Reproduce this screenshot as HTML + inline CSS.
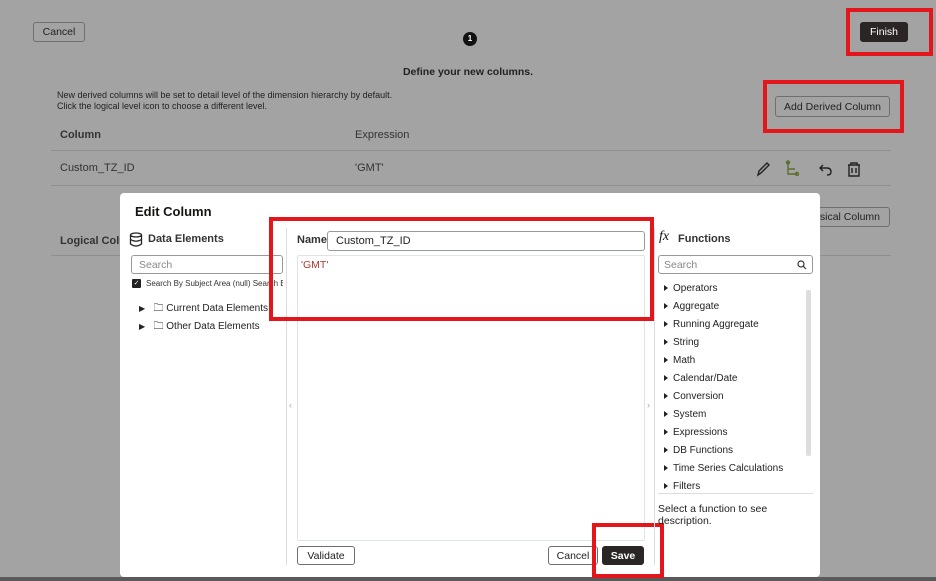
<!DOCTYPE html>
<html><head><meta charset="utf-8"><style>
*{box-sizing:border-box;margin:0;padding:0}
body{width:936px;height:581px;background:#a3a3a3;font-family:"Liberation Sans",sans-serif;color:#161513;position:relative;overflow:hidden;font-size:11px}
.a{position:absolute;white-space:nowrap}
.btn{position:absolute;border:1px solid #6f6f6f;border-radius:3px;font-size:10.5px;display:flex;align-items:center;justify-content:center;color:#222;white-space:nowrap;overflow:hidden}
.red{position:absolute;border:4px solid #e3161b}
.line{position:absolute;height:1px;background:#8f8f8f}
.fn{position:absolute;font-size:10px;color:#222;white-space:nowrap}
.fn:before{content:"";display:inline-block;border-left:4px solid #222;border-top:3.5px solid transparent;border-bottom:3.5px solid transparent;margin-right:5px;vertical-align:0px}
</style></head><body>
<div class="btn" style="left:33px;top:22px;width:52px;height:20px;">Cancel</div>
<div class="a" style="left:463px;top:32px;width:14px;height:14px;border-radius:50%;background:#111;color:#fff;font-size:8px;font-weight:bold;text-align:center;line-height:14px">1</div>
<div class="btn" style="left:860px;top:22px;width:48px;height:20px;background:#2a2625;color:#fff;border-color:#2a2625">Finish</div>
<div class="red" style="left:846px;top:8px;width:87px;height:48px"></div>
<div class="a" style="left:0;width:936px;top:66px;text-align:center;font-size:10.5px;font-weight:bold;color:#222">Define your new columns.</div>
<div class="a" style="left:57px;top:90px;font-size:9px;line-height:11px;color:#222">New derived columns will be set to detail level of the dimension hierarchy by default.<br>Click the logical level icon to choose a different level.</div>
<div class="btn" style="left:775px;top:96px;width:115px;height:21px;">Add Derived Column</div>
<div class="red" style="left:763px;top:80px;width:141px;height:53px"></div>
<div class="a" style="left:60px;top:129px;font-size:11px;font-weight:bold;color:#333">Column</div>
<div class="a" style="left:355px;top:129px;font-size:11px;color:#333">Expression</div>
<div class="line" style="left:51px;top:150px;width:840px"></div>
<div class="a" style="left:60px;top:162px;font-size:11px;color:#333">Custom_TZ_ID</div>
<div class="a" style="left:355px;top:162px;font-size:11px;color:#333">'GMT'</div>
<svg class="a" style="left:755px;top:160px" width="110" height="18" viewBox="0 0 110 18" fill="none" stroke="#222" stroke-width="1.4">
<path d="M3 15 L4 11 L12 3 L14 5 L6 13 Z"/>
<path d="M33 2 V14 H42 M33 9 H40" stroke="#5a6e2a"/><circle cx="33" cy="2.5" r="1.5" stroke="#5a6e2a"/><circle cx="42" cy="14" r="1.5" stroke="#5a6e2a"/>
<path d="M68 5 L65 8 L68 11 M65 8 H72 Q76 8 76 12 Q76 15 72 15"/>
<path d="M93 5 H105 M96 5 V3 H102 V5 M94 5 V16 H104 V5 M97 8 V13 M101 8 V13"/>
</svg>
<div class="line" style="left:51px;top:185px;width:840px"></div>
<div class="btn" style="left:800px;top:207px;width:90px;height:20px;justify-content:flex-end;padding-right:9px">Physical Column</div>
<div class="a" style="left:60px;top:235px;font-size:11px;font-weight:bold;color:#333">Logical Column</div>
<div class="line" style="left:51px;top:255px;width:840px"></div>

<div class="a" style="left:120px;top:193px;width:700px;height:384px;background:#fff;border-radius:4px"></div>
<div class="a" style="left:0;top:577px;width:936px;height:4px;background:#5a5a5a"></div>
<div class="a" style="left:135px;top:204px;font-size:13px;font-weight:bold">Edit Column</div>
<svg class="a" style="left:129px;top:232px" width="14" height="15" viewBox="0 0 14 15" fill="none" stroke="#222" stroke-width="1.3"><ellipse cx="7" cy="3" rx="5.5" ry="2"/><path d="M1.5 3 V12 Q7 16 12.5 12 V3 M1.5 7.5 Q7 11 12.5 7.5"/></svg>
<div class="a" style="left:148px;top:233px;font-size:11px;font-weight:bold;color:#333">Data Elements</div>
<div class="a" style="left:131px;top:255px;width:152px;height:19px;border:1px solid #999;border-radius:3px;padding:3px 7px;color:#888;font-size:10.5px">Search</div>
<div class="a" style="left:132px;top:279px;width:9px;height:9px;background:#222;border-radius:1px;color:#fff;font-size:7px;line-height:9px;text-align:center">✓</div>
<div class="a" style="left:146px;top:279px;font-size:8px;color:#333;width:137px;overflow:hidden">Search By Subject Area (null) Search By</div>
<div class="a" style="left:139px;top:300px;font-size:10px;color:#222;line-height:18px"><span style="font-size:8px">▶</span>&nbsp;&nbsp;&nbsp;🗀 Current Data Elements<br><span style="font-size:8px">▶</span>&nbsp;&nbsp;&nbsp;🗀 Other Data Elements</div>
<div class="a" style="left:286px;top:228px;width:1px;height:337px;background:#ddd"></div>
<div class="a" style="left:289px;top:400px;font-size:9px;color:#aaa">‹</div>
<div class="a" style="left:297px;top:234px;font-size:11px;font-weight:bold;color:#333">Name</div>
<div class="a" style="left:327px;top:231px;width:318px;height:20px;border:1px solid #999;border-radius:3px;padding:3px 8px;font-size:11px;color:#222">Custom_TZ_ID</div>
<div class="a" style="left:297px;top:255px;width:348px;height:286px;border:1px solid #dde3e6;border-radius:2px;padding:3px 3px;font-size:10.5px;color:#b03a2e">'GMT'</div>
<div class="red" style="left:269px;top:217px;width:385px;height:104px"></div>
<div class="a" style="left:647px;top:400px;font-size:9px;color:#aaa">›</div>
<div class="btn" style="left:297px;top:546px;width:58px;height:19px;">Validate</div>
<div class="btn" style="left:548px;top:546px;width:50px;height:19px;">Cancel</div>
<div class="btn" style="left:602px;top:546px;width:42px;height:19px;background:#2a2625;color:#fff;border-color:#2a2625;font-weight:bold">Save</div>
<div class="red" style="left:592px;top:523px;width:72px;height:55px"></div>
<div class="a" style="left:654px;top:228px;width:1px;height:337px;background:#ddd"></div>
<div class="a" style="left:659px;top:229px;font-size:14px;font-style:italic;font-family:'Liberation Serif',serif">fx</div>
<div class="a" style="left:678px;top:233px;font-size:11px;font-weight:bold;color:#333">Functions</div>
<div class="a" style="left:658px;top:255px;width:155px;height:19px;border:1px solid #999;border-radius:3px;padding:3px 5px;color:#888;font-size:10.5px">Search</div>
<svg class="a" style="left:797px;top:260px" width="10" height="10" viewBox="0 0 10 10" fill="none" stroke="#333" stroke-width="1.2"><circle cx="4" cy="4" r="3"/><path d="M6.3 6.3 L9 9"/></svg>
<div class="a" style="left:658px;top:282px;width:155px;height:208px;overflow:hidden">
<div class="fn" style="left:6px;top:1px">Operators</div>
<div class="fn" style="left:6px;top:19px">Aggregate</div>
<div class="fn" style="left:6px;top:37px">Running Aggregate</div>
<div class="fn" style="left:6px;top:55px">String</div>
<div class="fn" style="left:6px;top:73px">Math</div>
<div class="fn" style="left:6px;top:91px">Calendar/Date</div>
<div class="fn" style="left:6px;top:109px">Conversion</div>
<div class="fn" style="left:6px;top:127px">System</div>
<div class="fn" style="left:6px;top:145px">Expressions</div>
<div class="fn" style="left:6px;top:163px">DB Functions</div>
<div class="fn" style="left:6px;top:181px">Time Series Calculations</div>
<div class="fn" style="left:6px;top:199px">Filters</div>
</div>
<div class="a" style="left:806px;top:290px;width:5px;height:166px;background:#ddd;border-radius:2px"></div>
<div class="a" style="left:658px;top:493px;width:155px;height:1px;background:#ddd"></div>
<div class="a" style="left:658px;top:503px;font-size:10.5px;line-height:12px;color:#222">Select a function to see<br>description.</div>
</body></html>
